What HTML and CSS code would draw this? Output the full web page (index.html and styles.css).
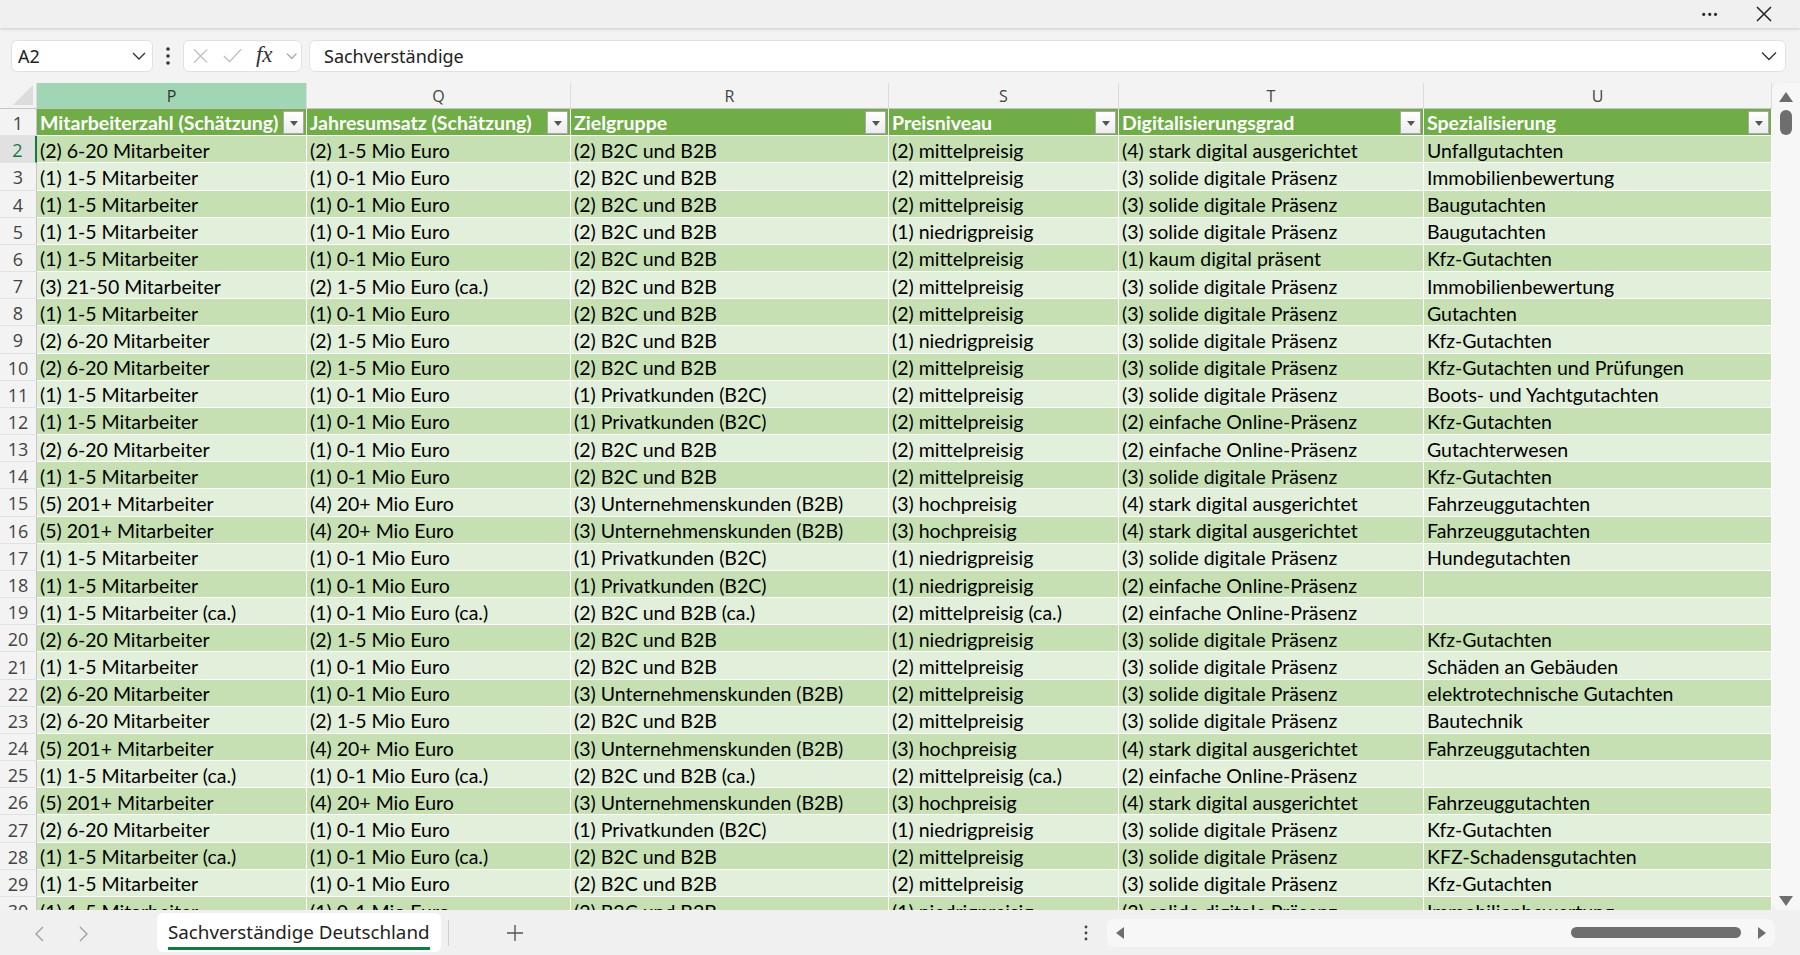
FILE: index.html
```html
<!DOCTYPE html>
<html lang="de">
<head>
    <meta charset="UTF-8">
    <title>Sachverständige Deutschland</title>
    <link rel="stylesheet" href="styles.css">
</head>
<body>
    <div class="topbar">
        <span class="more">&bull;&bull;&bull;</span>
        <svg class="close" width="18" height="18" viewBox="0 0 18 18"><path d="M2 2L16 16M16 2L2 16" stroke="#222" stroke-width="1.5" fill="none"/></svg>
    </div>

    <div class="formula-bar">
        <div class="name-box">
            <span>A2</span>
            <svg width="14" height="10" viewBox="0 0 14 10"><path d="M1 2L7 8L13 2" stroke="#333" stroke-width="1.4" fill="none"/></svg>
        </div>
        <svg class="vdots" width="6" height="20" viewBox="0 0 6 20"><circle cx="3" cy="3" r="1.8" fill="#333"/><circle cx="3" cy="10" r="1.8" fill="#333"/><circle cx="3" cy="17" r="1.8" fill="#333"/></svg>
        <div class="fx-box">
            <svg width="18" height="18" viewBox="0 0 18 18"><path d="M2 2L16 16M16 2L2 16" stroke="#b8b8b8" stroke-width="1.3" fill="none"/></svg>
            <svg width="22" height="18" viewBox="0 0 22 18"><path d="M2 9L8 15L20 2" stroke="#b8b8b8" stroke-width="1.3" fill="none"/></svg>
            <span class="fx">fx</span>
            <svg width="12" height="8" viewBox="0 0 12 8"><path d="M1 1.5L6 6.5L11 1.5" stroke="#999" stroke-width="1.2" fill="none"/></svg>
        </div>
        <div class="formula-input">
            <span>Sachverständige</span>
            <svg width="16" height="10" viewBox="0 0 16 10"><path d="M1 1.5L8 8.5L15 1.5" stroke="#333" stroke-width="1.4" fill="none"/></svg>
        </div>
    </div>

    <div class="sheet-wrap">
        <div class="sheet">
            <table class="grid">
                <colgroup>
                    <col style="width:37px">
                    <col style="width:270px">
                    <col style="width:264px">
                    <col style="width:318px">
                    <col style="width:230px">
                    <col style="width:305px">
                    <col style="width:348px">
                </colgroup>
                <thead>
                    <tr class="letters">
                        <th class="corner"><span class="tri"></span></th>
                        <th class="sel">P</th>
                        <th>Q</th>
                        <th>R</th>
                        <th>S</th>
                        <th>T</th>
                        <th>U</th>
                    </tr>
                </thead>
                <tbody>
                    <tr class="head-row">
                        <th class="rownum">1</th>
                        <td><div class="hcell">Mitarbeiterzahl (Schätzung)<span class="filter"></span></div></td>
                        <td><div class="hcell">Jahresumsatz (Schätzung)<span class="filter"></span></div></td>
                        <td><div class="hcell">Zielgruppe<span class="filter"></span></div></td>
                        <td><div class="hcell">Preisniveau<span class="filter"></span></div></td>
                        <td><div class="hcell">Digitalisierungsgrad<span class="filter"></span></div></td>
                        <td><div class="hcell">Spezialisierung<span class="filter"></span></div></td>
                    </tr>
                    <tr class="dark"><th class="rownum sel">2</th><td>(2) 6-20 Mitarbeiter</td><td>(2) 1-5 Mio Euro</td><td>(2) B2C und B2B</td><td>(2) mittelpreisig</td><td>(4) stark digital ausgerichtet</td><td>Unfallgutachten</td></tr>
                    <tr class="light"><th class="rownum">3</th><td>(1) 1-5 Mitarbeiter</td><td>(1) 0-1 Mio Euro</td><td>(2) B2C und B2B</td><td>(2) mittelpreisig</td><td>(3) solide digitale Präsenz</td><td>Immobilienbewertung</td></tr>
                    <tr class="dark"><th class="rownum">4</th><td>(1) 1-5 Mitarbeiter</td><td>(1) 0-1 Mio Euro</td><td>(2) B2C und B2B</td><td>(2) mittelpreisig</td><td>(3) solide digitale Präsenz</td><td>Baugutachten</td></tr>
                    <tr class="light"><th class="rownum">5</th><td>(1) 1-5 Mitarbeiter</td><td>(1) 0-1 Mio Euro</td><td>(2) B2C und B2B</td><td>(1) niedrigpreisig</td><td>(3) solide digitale Präsenz</td><td>Baugutachten</td></tr>
                    <tr class="dark"><th class="rownum">6</th><td>(1) 1-5 Mitarbeiter</td><td>(1) 0-1 Mio Euro</td><td>(2) B2C und B2B</td><td>(2) mittelpreisig</td><td>(1) kaum digital präsent</td><td>Kfz-Gutachten</td></tr>
                    <tr class="light"><th class="rownum">7</th><td>(3) 21-50 Mitarbeiter</td><td>(2) 1-5 Mio Euro (ca.)</td><td>(2) B2C und B2B</td><td>(2) mittelpreisig</td><td>(3) solide digitale Präsenz</td><td>Immobilienbewertung</td></tr>
                    <tr class="dark"><th class="rownum">8</th><td>(1) 1-5 Mitarbeiter</td><td>(1) 0-1 Mio Euro</td><td>(2) B2C und B2B</td><td>(2) mittelpreisig</td><td>(3) solide digitale Präsenz</td><td>Gutachten</td></tr>
                    <tr class="light"><th class="rownum">9</th><td>(2) 6-20 Mitarbeiter</td><td>(2) 1-5 Mio Euro</td><td>(2) B2C und B2B</td><td>(1) niedrigpreisig</td><td>(3) solide digitale Präsenz</td><td>Kfz-Gutachten</td></tr>
                    <tr class="dark"><th class="rownum">10</th><td>(2) 6-20 Mitarbeiter</td><td>(2) 1-5 Mio Euro</td><td>(2) B2C und B2B</td><td>(2) mittelpreisig</td><td>(3) solide digitale Präsenz</td><td>Kfz-Gutachten und Prüfungen</td></tr>
                    <tr class="light"><th class="rownum">11</th><td>(1) 1-5 Mitarbeiter</td><td>(1) 0-1 Mio Euro</td><td>(1) Privatkunden (B2C)</td><td>(2) mittelpreisig</td><td>(3) solide digitale Präsenz</td><td>Boots- und Yachtgutachten</td></tr>
                    <tr class="dark"><th class="rownum">12</th><td>(1) 1-5 Mitarbeiter</td><td>(1) 0-1 Mio Euro</td><td>(1) Privatkunden (B2C)</td><td>(2) mittelpreisig</td><td>(2) einfache Online-Präsenz</td><td>Kfz-Gutachten</td></tr>
                    <tr class="light"><th class="rownum">13</th><td>(2) 6-20 Mitarbeiter</td><td>(1) 0-1 Mio Euro</td><td>(2) B2C und B2B</td><td>(2) mittelpreisig</td><td>(2) einfache Online-Präsenz</td><td>Gutachterwesen</td></tr>
                    <tr class="dark"><th class="rownum">14</th><td>(1) 1-5 Mitarbeiter</td><td>(1) 0-1 Mio Euro</td><td>(2) B2C und B2B</td><td>(2) mittelpreisig</td><td>(3) solide digitale Präsenz</td><td>Kfz-Gutachten</td></tr>
                    <tr class="light"><th class="rownum">15</th><td>(5) 201+ Mitarbeiter</td><td>(4) 20+ Mio Euro</td><td>(3) Unternehmenskunden (B2B)</td><td>(3) hochpreisig</td><td>(4) stark digital ausgerichtet</td><td>Fahrzeuggutachten</td></tr>
                    <tr class="dark"><th class="rownum">16</th><td>(5) 201+ Mitarbeiter</td><td>(4) 20+ Mio Euro</td><td>(3) Unternehmenskunden (B2B)</td><td>(3) hochpreisig</td><td>(4) stark digital ausgerichtet</td><td>Fahrzeuggutachten</td></tr>
                    <tr class="light"><th class="rownum">17</th><td>(1) 1-5 Mitarbeiter</td><td>(1) 0-1 Mio Euro</td><td>(1) Privatkunden (B2C)</td><td>(1) niedrigpreisig</td><td>(3) solide digitale Präsenz</td><td>Hundegutachten</td></tr>
                    <tr class="dark"><th class="rownum">18</th><td>(1) 1-5 Mitarbeiter</td><td>(1) 0-1 Mio Euro</td><td>(1) Privatkunden (B2C)</td><td>(1) niedrigpreisig</td><td>(2) einfache Online-Präsenz</td><td></td></tr>
                    <tr class="light"><th class="rownum">19</th><td>(1) 1-5 Mitarbeiter (ca.)</td><td>(1) 0-1 Mio Euro (ca.)</td><td>(2) B2C und B2B (ca.)</td><td>(2) mittelpreisig (ca.)</td><td>(2) einfache Online-Präsenz</td><td></td></tr>
                    <tr class="dark"><th class="rownum">20</th><td>(2) 6-20 Mitarbeiter</td><td>(2) 1-5 Mio Euro</td><td>(2) B2C und B2B</td><td>(1) niedrigpreisig</td><td>(3) solide digitale Präsenz</td><td>Kfz-Gutachten</td></tr>
                    <tr class="light"><th class="rownum">21</th><td>(1) 1-5 Mitarbeiter</td><td>(1) 0-1 Mio Euro</td><td>(2) B2C und B2B</td><td>(2) mittelpreisig</td><td>(3) solide digitale Präsenz</td><td>Schäden an Gebäuden</td></tr>
                    <tr class="dark"><th class="rownum">22</th><td>(2) 6-20 Mitarbeiter</td><td>(1) 0-1 Mio Euro</td><td>(3) Unternehmenskunden (B2B)</td><td>(2) mittelpreisig</td><td>(3) solide digitale Präsenz</td><td>elektrotechnische Gutachten</td></tr>
                    <tr class="light"><th class="rownum">23</th><td>(2) 6-20 Mitarbeiter</td><td>(2) 1-5 Mio Euro</td><td>(2) B2C und B2B</td><td>(2) mittelpreisig</td><td>(3) solide digitale Präsenz</td><td>Bautechnik</td></tr>
                    <tr class="dark"><th class="rownum">24</th><td>(5) 201+ Mitarbeiter</td><td>(4) 20+ Mio Euro</td><td>(3) Unternehmenskunden (B2B)</td><td>(3) hochpreisig</td><td>(4) stark digital ausgerichtet</td><td>Fahrzeuggutachten</td></tr>
                    <tr class="light"><th class="rownum">25</th><td>(1) 1-5 Mitarbeiter (ca.)</td><td>(1) 0-1 Mio Euro (ca.)</td><td>(2) B2C und B2B (ca.)</td><td>(2) mittelpreisig (ca.)</td><td>(2) einfache Online-Präsenz</td><td></td></tr>
                    <tr class="dark"><th class="rownum">26</th><td>(5) 201+ Mitarbeiter</td><td>(4) 20+ Mio Euro</td><td>(3) Unternehmenskunden (B2B)</td><td>(3) hochpreisig</td><td>(4) stark digital ausgerichtet</td><td>Fahrzeuggutachten</td></tr>
                    <tr class="light"><th class="rownum">27</th><td>(2) 6-20 Mitarbeiter</td><td>(1) 0-1 Mio Euro</td><td>(1) Privatkunden (B2C)</td><td>(1) niedrigpreisig</td><td>(3) solide digitale Präsenz</td><td>Kfz-Gutachten</td></tr>
                    <tr class="dark"><th class="rownum">28</th><td>(1) 1-5 Mitarbeiter (ca.)</td><td>(1) 0-1 Mio Euro (ca.)</td><td>(2) B2C und B2B</td><td>(2) mittelpreisig</td><td>(3) solide digitale Präsenz</td><td>KFZ-Schadensgutachten</td></tr>
                    <tr class="light"><th class="rownum">29</th><td>(1) 1-5 Mitarbeiter</td><td>(1) 0-1 Mio Euro</td><td>(2) B2C und B2B</td><td>(2) mittelpreisig</td><td>(3) solide digitale Präsenz</td><td>Kfz-Gutachten</td></tr>
                    <tr class="dark"><th class="rownum">30</th><td>(1) 1-5 Mitarbeiter</td><td>(1) 0-1 Mio Euro</td><td>(2) B2C und B2B</td><td>(1) niedrigpreisig</td><td>(3) solide digitale Präsenz</td><td>Immobilienbewertung</td></tr>
                </tbody>
            </table>
        </div>
        <div class="vscroll">
            <svg width="16" height="12" viewBox="0 0 16 12"><path d="M8 1L15 11H1Z" fill="#6e6e6e"/></svg>
            <div class="vthumb"></div>
            <div class="vspace"></div>
            <svg width="16" height="12" viewBox="0 0 16 12"><path d="M1 1H15L8 11Z" fill="#6e6e6e"/></svg>
        </div>
    </div>

    <div class="tabbar">
        <div class="tab-nav">
            <svg width="12" height="18" viewBox="0 0 12 18"><path d="M10 2L3 9L10 16" stroke="#a0a0a0" stroke-width="1.4" fill="none"/></svg>
            <svg width="12" height="18" viewBox="0 0 12 18"><path d="M2 2L9 9L2 16" stroke="#a0a0a0" stroke-width="1.4" fill="none"/></svg>
        </div>
        <div class="tab active"><span>Sachverständige Deutschland</span></div>
        <div class="tab-sep"></div>
        <svg class="add" width="18" height="18" viewBox="0 0 18 18"><path d="M9 1V17M1 9H17" stroke="#555" stroke-width="1.4" fill="none"/></svg>
        <div class="tab-fill"></div>
        <svg class="vdots small" width="4" height="16" viewBox="0 0 4 16"><circle cx="2" cy="2" r="1.4" fill="#444"/><circle cx="2" cy="8" r="1.4" fill="#444"/><circle cx="2" cy="14" r="1.4" fill="#444"/></svg>
        <div class="hscroll">
            <svg width="10" height="14" viewBox="0 0 10 14"><path d="M9 1V13L1 7Z" fill="#6e6e6e"/></svg>
            <div class="hspace"></div>
            <div class="hthumb"></div>
            <svg width="10" height="14" viewBox="0 0 10 14"><path d="M1 1V13L9 7Z" fill="#6e6e6e"/></svg>
        </div>
    </div>
</body>
</html>
```

FILE: styles.css
```css
body {
    margin: 0;
    width: 1800px;
    height: 955px;
    overflow: hidden;
    background-color: #f0f0f0;
    font-family: "Noto Sans", Arial, sans-serif;
    color: #222;
}

/* top window strip */
.topbar {
    height: 28px;
    display: flex;
    align-items: center;
    justify-content: flex-end;
    gap: 36px;
    padding-right: 27px;
    background-color: #f0f0f0;
    box-shadow: 0 1px 3px rgba(0, 0, 0, 0.18);
    position: relative;
}

.more {
    font-size: 13px;
    letter-spacing: 1px;
    color: #222;
}

/* formula bar */
.formula-bar {
    height: 55px;
    display: flex;
    align-items: flex-start;
    padding: 12px 14px 0 11px;
    box-sizing: border-box;
    background-color: #f3f3f3;
}

.name-box,
.fx-box,
.formula-input {
    height: 32px;
    box-sizing: border-box;
    background-color: #fff;
    border: 1px solid #e1e1e1;
    border-radius: 6px;
    display: flex;
    align-items: center;
}

.name-box {
    width: 142px;
    padding: 0 6px 0 6px;
    justify-content: space-between;
    font-size: 18px;
}

.vdots {
    margin: 6px 12px 0 12px;
}

.fx-box {
    width: 119px;
    padding: 0 4px 0 8px;
    gap: 13px;
}

.fx {
    font-family: "Liberation Serif", "DejaVu Serif", serif;
    font-style: italic;
    font-size: 23px;
    color: #333;
    margin-top: -3px;
}

.formula-input {
    flex: 1;
    margin-left: 7px;
    padding: 0 8px 0 14px;
    justify-content: space-between;
    font-size: 18px;
}

/* sheet */
.sheet-wrap {
    height: 827px;
    display: flex;
}

.sheet {
    width: 1772px;
    overflow: hidden;
    background-color: #fff;
}

.grid {
    table-layout: fixed;
    width: 1772px;
    border-collapse: separate;
    border-spacing: 0;
    font-family: Lato, "Noto Sans", sans-serif;
    font-size: 19.5px;
}

.grid td {
    height: 27.18px;
    box-sizing: border-box;
    padding: 2px 0 0 3px;
    border-right: 1px solid #fff;
    border-bottom: 1px solid #fff;
    white-space: nowrap;
    overflow: hidden;
    color: #000;
}

.letters th {
    height: 26px;
    box-sizing: border-box;
    font-family: "Open Sans", sans-serif;
    font-weight: normal;
    font-size: 16px;
    color: #444;
    background-color: #f3f3f3;
    border-right: 1px solid #dcdcdc;
    border-bottom: 1px solid #c6c6c6;
    padding: 0;
}

.letters th.sel {
    background-color: #a0d6b4;
    color: #333;
}

.corner {
    position: relative;
}

.tri {
    position: absolute;
    right: 3px;
    bottom: 3px;
    width: 0;
    height: 0;
    border-left: 20px solid transparent;
    border-bottom: 20px solid #dcdcdc;
}

.rownum {
    font-family: "Open Sans", sans-serif;
    font-weight: normal;
    font-size: 18px;
    color: #444;
    background-color: #f3f3f3;
    border-right: 1px solid #c6c6c6;
    border-bottom: 1px solid #e1e1e1;
    padding: 2px 0 0;
    text-align: center;
}

.rownum.sel {
    background-color: #e1e1e1;
    color: #107c41;
    border-right: 2px solid #107c41;
}

.head-row td {
    background-color: #70ad47;
    color: #fff;
    font-weight: bold;
    padding: 1px 2px 0 3px;
}

.hcell {
    display: flex;
    align-items: center;
    justify-content: space-between;
}

.filter {
    width: 21px;
    height: 23px;
    box-sizing: border-box;
    border: 1px solid #a9a9a9;
    background: linear-gradient(#ffffff, #ececec);
    position: relative;
}

.filter::after {
    content: "";
    position: absolute;
    left: 6px;
    top: 9px;
    border-left: 4px solid transparent;
    border-right: 4px solid transparent;
    border-top: 5px solid #555;
}

.dark td {
    background-color: #c6e0b4;
}

.light td {
    background-color: #e2efda;
}

/* vertical scrollbar */
.vscroll {
    width: 28px;
    display: flex;
    flex-direction: column;
    align-items: center;
    padding: 8px 0 3px;
    box-sizing: border-box;
    background-color: #f7f7f7;
    border-radius: 8px 0 0 8px;
}

.vthumb {
    width: 12px;
    height: 25px;
    margin-top: 7px;
    border-radius: 6px;
    background-color: #6e6e6e;
}

.vspace {
    flex: 1;
}

/* sheet tabs */
.tabbar {
    height: 45px;
    display: flex;
    align-items: center;
    padding-left: 33px;
}

.tab-nav {
    display: flex;
    gap: 33px;
    margin-top: 2px;
}

.tab {
    margin-left: 67px;
    height: 39px;
    box-sizing: border-box;
    padding: 0 11px;
    background-color: #fff;
    border-radius: 6px;
    display: flex;
    align-items: center;
    font-size: 18.8px;
    color: #222;
}

.tab span {
    border-bottom: 3px solid #107c41;
    padding-top: 1px;
    line-height: 30px;
}

.tab-sep {
    width: 1px;
    height: 26px;
    background-color: #cfcfcf;
    margin-left: 7px;
}

.add {
    margin-left: 57px;
}

.tab-fill {
    flex: 1;
}

.vdots.small {
    margin: 0 19px 0 0;
}

.hscroll {
    width: 668px;
    height: 28px;
    margin-right: 25px;
    border-radius: 8px;
    background-color: #f7f7f7;
    display: flex;
    align-items: center;
    padding: 0 8px;
    box-sizing: border-box;
}

.hspace {
    flex: 1;
}

.hthumb {
    width: 170px;
    height: 11px;
    border-radius: 6px;
    background-color: #6e6e6e;
    margin-right: 16px;
}
```
